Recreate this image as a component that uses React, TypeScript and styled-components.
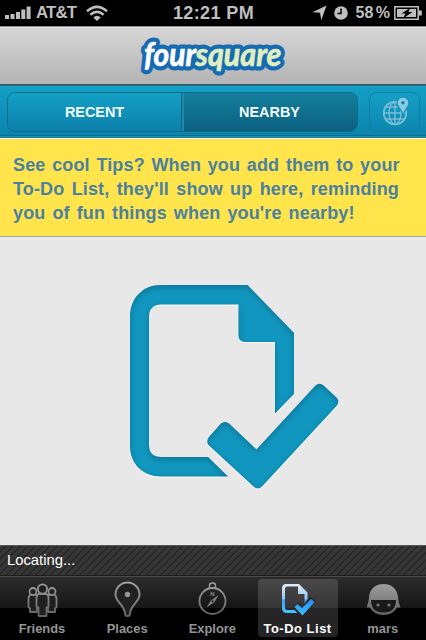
import React from "react";
import styled, { createGlobalStyle } from "styled-components";

const Global = createGlobalStyle`
  * { box-sizing: border-box; }
  html, body { margin: 0; padding: 0; background: #000; }
  body { font-family: "Liberation Sans", Arial, Helvetica, sans-serif; overflow: hidden; }
  svg { display: block; flex: none; }
`;

const Screen = styled.div`
  width: 426px;
  height: 640px;
  display: flex;
  flex-direction: column;
  overflow: hidden;
  background: #e8e8e8;
`;

const StatusBar = styled.header`
  height: 26px;
  flex: none;
  display: grid;
  grid-template-columns: 1fr auto 1fr;
  align-items: center;
  padding: 0 4px 0 5px;
  background: #000;
  color: #bfbfbf;
  font-size: 17px;
  font-weight: bold;
  line-height: 26px;
`;

const StatusGroup = styled.div<{ $end?: boolean }>`
  display: flex;
  align-items: center;
  justify-content: ${(p) => (p.$end ? "flex-end" : "flex-start")};
`;

const Carrier = styled.span`
  margin: 0 10px 0 5px;
  font-size: 16.8px;
  letter-spacing: -0.8px;
`;

const Clock = styled.span`
  font-size: 18px;
  letter-spacing: 0.4px;
`;

const Percent = styled.span`
  margin: 0 4px 0 8px;
  font-size: 16px;
  word-spacing: -2px;
`;

const NavBar = styled.div`
  height: 59px;
  flex: none;
  display: flex;
  justify-content: center;
  padding-top: 8px;
  border-top: 1px solid #8a8a8a;
  border-bottom: 1px solid #524a4c;
  box-shadow: inset 0 1px #e6e6e6;
  background: linear-gradient(#d6d6d6, #b4b4b4);
`;

const Toolbar = styled.nav`
  height: 54px;
  flex: none;
  display: flex;
  align-items: flex-start;
  padding: 7px 5px 0 7px;
  background: linear-gradient(#14a0c6, #0b82ac);
  border-bottom: 1px solid #fdfbe8;
  box-shadow: inset 0 1px #0d7b98, inset 0 -1px #1f7f9c, inset 0 -2px #1590b5, inset 0 -3px #0b6f92;
`;

const Segments = styled.div`
  width: 351px;
  height: 40px;
  display: flex;
  border: 1px solid #0c6a8a;
  border-radius: 8px;
  overflow: hidden;
`;

const Segment = styled.button<{ $active?: boolean }>`
  flex: ${(p) => (p.$active ? "1" : "0 0 173px")};
  padding: 0 0 1px;
  border: 0;
  border-left: ${(p) => (p.$active ? "1px solid #0b6482" : "0")};
  color: #f2fbfd;
  font: bold 14.4px "Liberation Sans", Arial, sans-serif;
  background: ${(p) =>
    p.$active ? "linear-gradient(#137e9b, #0c6080)" : "linear-gradient(#14a0c6, #0c80ab)"};
  box-shadow: ${(p) => (p.$active ? "inset 2px 0 #2188a5" : "none")};
`;

const MapButton = styled.button`
  width: 51px;
  height: 40px;
  margin-left: 11px;
  display: flex;
  align-items: flex-start;
  padding: 4px 0 0 13px;
  border: 1px solid #0d7fa2;
  border-radius: 8px;
  background: linear-gradient(#14a0c6, #0d86b0);
`;

const Tip = styled.section`
  height: 98px;
  flex: none;
  padding: 14px 0 0 13px;
  background: #ffe44c;
  border-bottom: 1px solid #a9a69c;
  color: #4b81a0;
  font-size: 18px;
  font-weight: bold;
  line-height: 24px;
`;

const TipLine = styled.div<{ $gap: number }>`
  white-space: nowrap;
  letter-spacing: 0.15px;
  word-spacing: ${(p) => p.$gap}px;
`;

const Content = styled.main`
  flex: 1;
  padding: 43px 0 0 125px;
  background: #e8e8e8;
`;

const Locating = styled.div`
  height: 31px;
  flex: none;
  padding-left: 7px;
  color: #fff;
  font-size: 14.8px;
  line-height: 29px;
  border-top: 1px solid #555;
  border-bottom: 1px solid #1b1b1b;
  background: repeating-linear-gradient(135deg, #363636 0 3px, #252525 4px 4.5px, #363636 5.2px);
`;

const TabBar = styled.footer`
  height: 64px;
  flex: none;
  display: flex;
  gap: 5.2px;
  padding: 2px 2px 2px;
  border-top: 1px solid #4b4b4b;
  background: linear-gradient(#2c2c2c, #161616 31px, #000 31px);
`;

const Tab = styled.button<{ $active?: boolean }>`
  width: 80px;
  flex: none;
  height: 58px;
  display: flex;
  flex-direction: column;
  align-items: center;
  padding: 1px 0 0;
  border: 0;
  border-radius: 4px;
  color: ${(p) => (p.$active ? "#fff" : "#949494")};
  background: ${(p) =>
    p.$active ? "linear-gradient(#494949, #353535 29px, #262626 29px, #252525)" : "transparent"};
`;

const TabLabel = styled.span<{ $track?: number }>`
  margin-top: 4px;
  font: bold 12.9px/14px "Liberation Sans", Arial, sans-serif;
  letter-spacing: ${(p) => p.$track ?? 0}px;
  white-space: nowrap;
`;

const Signal = () => (
  <svg width="26" height="14" viewBox="0 0 26 14" fill="#bfbfbf">
    <path d="M0 9h4v4H0zM5.500 8h4v5h-4zM11 6h4v7h-4zM16.300 3.500h4V13h-4zM21.600 .5h4V13h-4z" />
  </svg>
);

const Wifi = () => (
  <svg width="22" height="17" viewBox="0 0 22 17" fill="none" stroke="#bfbfbf" strokeWidth="2.500">
    <path d="M1 6.300Q11-2.600 21 6.300M4.400 9.700Q11 4 17.600 9.700" />
    <path d="M7.300 12.500Q11 9 14.700 12.500L11 16z" fill="#bfbfbf" stroke="none" />
  </svg>
);

const Arrow = () => (
  <svg width="22" height="16" viewBox="0 0 22 16" fill="#bfbfbf">
    <path d="M14.500 .5 9.300 15.300 8 7.800 .5 7.300z" />
  </svg>
);

const Alarm = () => (
  <svg width="14" height="14" viewBox="0 0 14 14">
    <circle cx="7" cy="7" r="6.800" fill="#bfbfbf" />
    <path d="M7 2.500v5H3.500" fill="none" stroke="#000" strokeWidth="1.500" />
  </svg>
);

const Battery = () => (
  <svg width="28" height="14" viewBox="0 0 28 14">
    <path d="M.8 .8h23.400v12.400H.8z" fill="none" stroke="#bfbfbf" strokeWidth="1.500" />
    <path d="M3 3h19v8H3zM25 4.500h2.800v5H25z" fill="#bfbfbf" />
    <path d="m16 2-8.500 5.500h4l-2.500 5 9.500-6.500h-4z" fill="#000" />
  </svg>
);

const Logo = () => (
  <svg width="150" height="44" viewBox="0 0 150 44">
    <g fontFamily="Lato, sans-serif" fontStyle="italic" fontWeight="700" fontSize="31.500">
      <g fill="#176bb2" stroke="#176bb2" strokeWidth="9" strokeLinejoin="round">
        <text x="6" y="30.500" textLength="52" lengthAdjust="spacingAndGlyphs">four</text>
        <text x="57.500" y="30.500" textLength="86" lengthAdjust="spacingAndGlyphs">square</text>
      </g>
      <g strokeWidth=".7">
        <text x="6" y="30.500" textLength="52" lengthAdjust="spacingAndGlyphs" fill="#fff" stroke="#fff">four</text>
        <text x="57.500" y="30.500" textLength="86" lengthAdjust="spacingAndGlyphs" fill="#e0efc0" stroke="#e0efc0">square</text>
      </g>
    </g>
  </svg>
);

const Globe = () => (
  <svg width="27" height="29" viewBox="0 0 27 29" fill="none" stroke="#79bdd6" strokeWidth="1.400">
    <circle cx="12" cy="16" r="11.300" strokeWidth="1.800" />
    <path d="M12 5v22M1 16h22M3 10h18M3 22h18" />
    <ellipse cx="12" cy="16" rx="6" ry="11" />
    <path d="M20 18.500C19.500 12.500 14 10.500 14 6a6 6 0 0 1 12 0c0 4.500-5 6.500-6 12.500z" fill="#8acbdf" stroke="#1093bb" strokeWidth="1.200" />
    <circle cx="20" cy="5.800" r="1.700" fill="#0d86ae" stroke="none" />
  </svg>
);

const BigList = () => (
  <svg width="220" height="216" viewBox="125 280 220 216">
    <defs>
      <filter id="carve" x="-5%" y="-5%" width="110%" height="112%" colorInterpolationFilters="sRGB">
        <feFlood floodColor="#065a78" floodOpacity=".6" result="ink" />
        <feComposite in="ink" in2="SourceAlpha" operator="out" result="outside" />
        <feGaussianBlur in="outside" stdDeviation="3" result="soft" />
        <feOffset in="soft" dy="1.500" result="shade" />
        <feComposite in="shade" in2="SourceAlpha" operator="in" result="inner" />
        <feDropShadow in="SourceGraphic" dx="0" dy="1" stdDeviation=".3" floodColor="#fff" result="base" />
        <feMerge>
          <feMergeNode in="base" />
          <feMergeNode in="inner" />
        </feMerge>
      </filter>
    </defs>
    <g fill="#1197bf" filter="url(#carve)">
      <path d="M161 285H247.500L294 333V394L275 413.500V342H245Q238.500 342 238.500 335V304.500H161Q149 305 149 317V445Q149 457 161 457H208L228 476.500H161C143 476.500 130 464 130 446V317C130 298 143 285 161 285Z" />
      <path d="M221 423.500Q225 420.500 229 423.500L256.500 449.500 315.500 385.500Q319.500 382 323.500 385.500L336.500 397.500Q340 401.500 336.500 406L262 486.500Q258 490.500 253.500 486.500L209 445.500Q205.500 441.500 209 437Z" />
    </g>
  </svg>
);

const Metal = () => (
  <linearGradient id="metal" x1="0" y1="0" x2="0" y2="36" gradientUnits="userSpaceOnUse">
    <stop stopColor="#a5a5a5" />
    <stop offset="1" stopColor="#626262" />
  </linearGradient>
);

const FriendsIcon = () => (
  <svg width="34" height="38" viewBox="0 0 34 38">
    <defs><Metal /></defs>
    <g fill="#202020" stroke="url(#metal)" strokeWidth="1.800" strokeLinejoin="round">
      <path d="M5.500 14.500Q3.500 16 3.500 19v8l1.500 1.500v3.500h7V15zM29.500 14.500Q31.500 16 31.500 19v8l-1.500 1.500v3.500h-7V15z" />
      <circle cx="8" cy="11.500" r="3.500" />
      <circle cx="27" cy="11.500" r="3.500" />
      <path d="M13.500 14Q11.500 15 11.500 18.500v8l2 1v8.500h8v-8.500l2-1v-8q0-3.500-2-4.500z" />
      <circle cx="17.500" cy="9" r="4.600" />
    </g>
  </svg>
);

const PlacesIcon = () => (
  <svg width="28" height="38" viewBox="0 0 28 38">
    <path d="M14.500 36C13 36 12 35 12 33.500 11.500 25 2.500 22 2.500 14.500a12 12 0 0 1 24 0C26.500 22 17.500 25 17 33.500 17 35 16 36 14.500 36z" fill="#202020" stroke="url(#metal)" strokeWidth="2" />
    <circle cx="14.500" cy="14.500" r="2.700" fill="#949494" />
  </svg>
);

const ExploreIcon = () => (
  <svg width="30" height="38" viewBox="0 0 30 38">
    <g fill="none" stroke="url(#metal)">
      <circle cx="15.500" cy="21" r="13" strokeWidth="1.900" />
      <path d="M12.500 7V5.500a3 2.500 0 0 1 6 0V7" strokeWidth="1.400" />
      <path d="M11.500 8h8" strokeWidth="1.800" />
    </g>
    <path d="M21.500 15 17.500 22 9.500 27.500 14 20.500z" fill="#858585" />
    <circle cx="15.700" cy="21.200" r="1" fill="#171717" />
    <text x="15.500" y="16" textAnchor="middle" fontSize="6" fontWeight="bold" fill="#888">N</text>
  </svg>
);

const TodoIcon = () => (
  <svg width="36" height="38" viewBox="0 0 36 38">
    <defs>
      <linearGradient id="page" x1="0" y1="0" x2="0" y2="1">
        <stop stopColor="#e2edfc" /><stop offset=".5" stopColor="#9bc5f3" /><stop offset=".55" stopColor="#3aa4f4" /><stop offset="1" stopColor="#49c2ff" />
      </linearGradient>
      <linearGradient id="tick" x1="0" y1="0" x2="0" y2="1">
        <stop stopColor="#288cf1" /><stop offset="1" stopColor="#37c0ff" />
      </linearGradient>
    </defs>
    <path d="M6 4H19L27.500 12.500V22L24.500 24.500V14H18V6.500H7.500Q5 6.500 5 9V27.500Q5 30 7.500 30H14.500L17.500 33H7Q2 33 2 28V9Q2 4 6 4Z" fill="url(#page)" />
    <path d="m16 26 3-2.500 3.500 3.500 8-9 3.500 3L23 34z" fill="#2b2b2b" stroke="#2b2b2b" strokeWidth="2" />
    <path d="m14.500 27 3-3 4.500 4L31 19l3.500 3L22.500 35.500z" fill="url(#tick)" />
  </svg>
);

const FaceIcon = () => (
  <svg width="36" height="38" viewBox="0 0 36 38">
    <path d="M1.500 27.500Q4 22 4 17C5 8 11 4 18.500 4S32 8 33 17q0 5 2.500 10.500H32C29.500 32 25 35 18.500 35S7.500 32 5 27.500z" fill="url(#metal)" />
    <path d="M6 20H31Q31 32.500 18.500 32.500T6 20z" fill="#191919" />
    <circle cx="13" cy="25" r="1.600" fill="#777" />
    <circle cx="24" cy="25" r="1.600" fill="#777" />
  </svg>
);

const tabs = [
  { label: "Friends", Icon: FriendsIcon },
  { label: "Places", Icon: PlacesIcon },
  { label: "Explore", Icon: ExploreIcon },
  { label: "To-Do List", Icon: TodoIcon, active: true, track: 0.55 },
  { label: "mars", Icon: FaceIcon },
];

export default function App() {
  return (
    <>
      <Global />
      <Screen>
        <StatusBar>
          <StatusGroup>
            <Signal />
            <Carrier>AT&amp;T</Carrier>
            <Wifi />
          </StatusGroup>
          <Clock>12:21 PM</Clock>
          <StatusGroup $end>
            <Arrow />
            <Alarm />
            <Percent>58 %</Percent>
            <Battery />
          </StatusGroup>
        </StatusBar>
        <NavBar>
          <Logo />
        </NavBar>
        <Toolbar>
          <Segments>
            <Segment>RECENT</Segment>
            <Segment $active>NEARBY</Segment>
          </Segments>
          <MapButton aria-label="Map">
            <Globe />
          </MapButton>
        </Toolbar>
        <Tip>
          <TipLine $gap={1.5}>See cool Tips? When you add them to your</TipLine>
          <TipLine $gap={2.1}>To-Do List, they'll show up here, reminding</TipLine>
          <TipLine $gap={1.8}>you of fun things when you're nearby!</TipLine>
        </Tip>
        <Content>
          <BigList />
        </Content>
        <Locating>Locating...</Locating>
        <TabBar>
          {tabs.map(({ label, Icon, active, track }) => (
            <Tab key={label} $active={active}>
              <Icon />
              <TabLabel $track={track}>{label}</TabLabel>
            </Tab>
          ))}
        </TabBar>
      </Screen>
    </>
  );
}
